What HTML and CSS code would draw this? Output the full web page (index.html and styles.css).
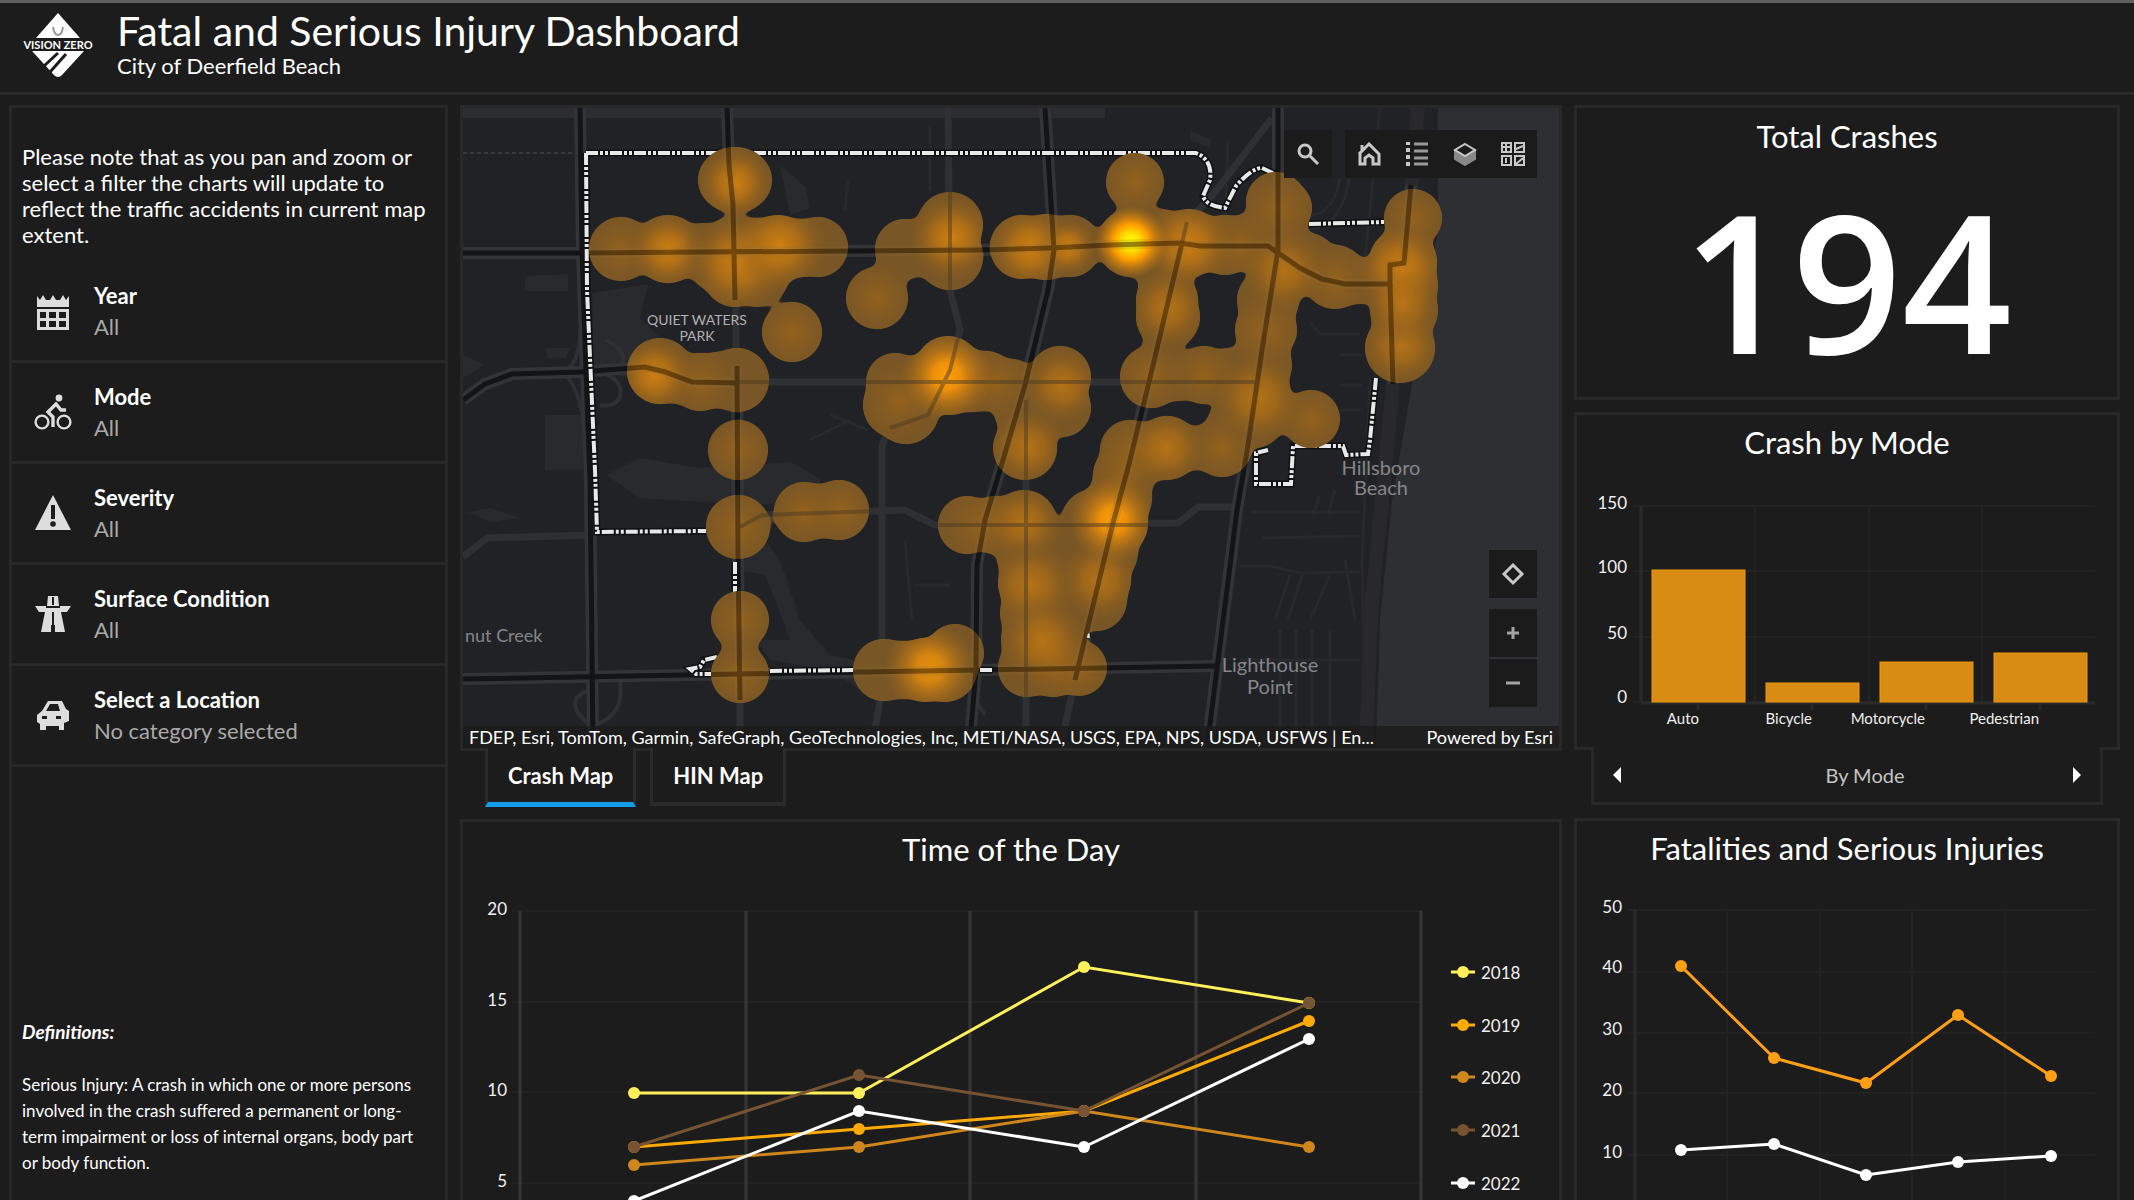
FILE: index.html
```html
<!DOCTYPE html>
<html lang="en">
<head>
<meta charset="utf-8">
<meta name="viewport" content="width=device-width, initial-scale=1">
<title>Fatal and Serious Injury Dashboard</title>
<link rel="stylesheet" href="styles.css">
</head>
<body>
<div class="app">
  <header class="topbar">
    <svg class="logo" viewBox="0 0 76 64" aria-hidden="true">
      <path d="M38 0 L60 25 H16 Z" fill="#fff"/>
      <path d="M33 14 C34 21 36 22 38 22 C40 22 42 21 43 14" fill="none" stroke="#999" stroke-width="2"/>
      <path d="M12 38 H64 L42 62 Q38 66 34 62 Z" fill="#fff"/>
      <path d="M38 40 L24 53 M46 41 L30 59" stroke="#1c1c1c" stroke-width="3"/>
      <text x="38" y="36" text-anchor="middle" class="logo-text">VISION ZERO</text>
    </svg>
    <div>
      <h1>Fatal and Serious Injury Dashboard</h1>
      <p class="subtitle">City of Deerfield Beach</p>
    </div>
  </header>

  <main class="grid">
    <aside class="panel sidebar">
      <p class="note">Please note that as you pan and zoom or select a filter the charts will update to reflect the traffic accidents in current map extent.</p>
      <button class="filter" type="button">
        <svg viewBox="0 0 38 38" aria-hidden="true"><path fill="#ddd" fill-rule="evenodd" d="M3 4 L6 8 L9 3 L12 8 H16 L19 3 L22 8 H26 L29 3 L32 8 L35 4 V15 H3 Z M3 17 H35 V38 H3 Z M6 20 V26 H12 V20 Z M15 20 V26 H22 V20 Z M25 20 V26 H32 V20 Z M6 29 V35 H12 V29 Z M15 29 V35 H22 V29 Z M25 29 V35 H32 V29 Z"/></svg>
        <span><b>Year</b><em>All</em></span>
      </button>
      <button class="filter" type="button">
        <svg viewBox="0 0 38 38" aria-hidden="true"><g fill="none" stroke="#ddd" stroke-width="2.4"><circle cx="8" cy="29" r="6.4"/><circle cx="30" cy="29" r="6.4"/><path stroke-width="3.4" d="M19 34 V24 L14 19 L22 11 L27 17 H32"/></g><circle cx="25" cy="5" r="3.4" fill="#ddd"/></svg>
        <span><b>Mode</b><em>All</em></span>
      </button>
      <button class="filter" type="button">
        <svg viewBox="0 0 38 38" aria-hidden="true"><path fill="#ddd" d="M19 1 L37 36 H1 Z"/><path d="M19 11 V25" stroke="#1c1c1c" stroke-width="4"/><circle cx="19" cy="30" r="2.8" fill="#1c1c1c"/></svg>
        <span><b>Severity</b><em>All</em></span>
      </button>
      <button class="filter" type="button">
        <svg viewBox="0 0 38 38" aria-hidden="true"><path fill="#ddd" d="M14 1 H24 L25 11 H37 L33 17 H27 L31 37 H21 V30 H17 V37 H7 L11 17 H5 L1 11 H13 Z"/><path d="M12 12 H26 M19 2 V10 M19 17 V30" stroke="#1c1c1c" stroke-width="2"/></svg>
        <span><b>Surface Condition</b><em>All</em></span>
      </button>
      <button class="filter" type="button">
        <svg viewBox="0 0 38 38" aria-hidden="true"><path fill="#ddd" fill-rule="evenodd" d="M14 5 H28 L32 13 L35 15 V25 L30 27 V34 H25 V30 H12 V34 H6 V28 L3 26 V19 L8 15 Z M16 8 L12 15 H26 L24 8 Z M8 20 V23 H13 V20 Z M22 20 V23 H27 V20 Z"/></svg>
        <span><b>Select a Location</b><em>No category selected</em></span>
      </button>
      <div class="definitions">
        <h2>Definitions:</h2>
        <p>Serious Injury: A crash in which one or more persons involved in the crash suffered a permanent or long-term impairment or loss of internal organs, body part or body function.</p>
      </div>
    </aside>

    <div class="column">
      <section>
        <div class="panel map">
          <svg class="map-canvas" viewBox="463 108 1096 640" preserveAspectRatio="xMidYMid slice" role="img" aria-label="Crash heat map">
            <defs>
              <filter id="merge" x="-5%" y="-5%" width="110%" height="110%" color-interpolation-filters="sRGB">
                <feGaussianBlur stdDeviation="4"/>
                <feComponentTransfer><feFuncA type="linear" slope="12" intercept="-5"/></feComponentTransfer>
              </filter>
              <mask id="blobs" maskUnits="userSpaceOnUse" x="463" y="108" width="1097" height="640">
                <g fill="#fff" filter="url(#merge)">
                <ellipse cx="735" cy="180" rx="37" ry="33"/>
                <circle cx="621" cy="249" r="32"/><circle cx="668" cy="249" r="34"/><circle cx="704" cy="252" r="29"/><circle cx="735" cy="250" r="34"/><circle cx="756" cy="250" r="32"/><circle cx="778" cy="249" r="34"/><circle cx="800" cy="248" r="29"/><circle cx="818" cy="247" r="30"/><circle cx="735" cy="275" r="32"/><circle cx="757" cy="275" r="32"/><circle cx="718" cy="262" r="30"/>
                <circle cx="792" cy="332" r="30"/>
                <circle cx="660" cy="371" r="33"/><circle cx="680" cy="378" r="26"/><circle cx="700" cy="382" r="29"/><circle cx="718" cy="380" r="28"/><circle cx="737" cy="380" r="32"/>
                <circle cx="738" cy="450" r="30"/>
                <circle cx="905" cy="249" r="30"/><circle cx="950" cy="225" r="33"/><circle cx="950" cy="257" r="33"/><circle cx="928" cy="247" r="30"/><circle cx="877" cy="298" r="31"/><circle cx="892" cy="272" r="17"/>
                <circle cx="895" cy="382" r="29"/><circle cx="948" cy="369" r="33"/><circle cx="950" cy="383" r="32"/><circle cx="920" cy="385" r="30"/><circle cx="906" cy="411" r="33"/><circle cx="896" cy="405" r="33"/><circle cx="986" cy="381" r="30"/><circle cx="972" cy="381" r="31"/>
                <circle cx="1022" cy="247" r="32"/><circle cx="1046" cy="247" r="33"/><circle cx="1070" cy="246" r="31"/>
                <circle cx="1135" cy="182" r="29"/><circle cx="1131" cy="243" r="34"/><rect x="1119" y="200" width="34" height="20"/><circle cx="1160" cy="240" r="31"/><circle cx="1189" cy="243" r="34"/><circle cx="1225" cy="245" r="30"/><circle cx="1250" cy="242" r="29"/>
                <circle cx="1165" cy="270" r="29"/><circle cx="1167" cy="300" r="31"/><circle cx="1168" cy="317" r="32"/><rect x="1144" y="335" width="36" height="24"/>
                <circle cx="1276" cy="202" r="30"/><circle cx="1284" cy="208" r="28"/><circle cx="1276" cy="230" r="31"/><circle cx="1278" cy="255" r="34"/><circle cx="1284" cy="272" r="31"/><circle cx="1308" cy="262" r="29"/><circle cx="1335" cy="277" r="32"/><circle cx="1360" cy="281" r="23"/>
                <circle cx="1413" cy="218" r="29"/><circle cx="1403" cy="262" r="34"/><circle cx="1404" cy="285" r="34"/><circle cx="1404" cy="310" r="34"/><circle cx="1400" cy="348" r="35"/>
                <circle cx="1268" cy="300" r="31"/><circle cx="1266" cy="330" r="31"/><circle cx="1261" cy="365" r="31"/><circle cx="1258" cy="395" r="33"/><circle cx="1254" cy="417" r="31"/><circle cx="1311" cy="419" r="29"/><rect x="1270" y="405" width="24" height="28"/>
                <circle cx="1151" cy="377" r="31"/><circle cx="1178" cy="376" r="25"/><circle cx="1204" cy="375" r="29"/><circle cx="1230" cy="375" r="27"/>
                <circle cx="1060" cy="377" r="31"/><circle cx="1062" cy="408" r="29"/><circle cx="1040" cy="410" r="28"/><circle cx="1025" cy="410" r="31"/><circle cx="1012" cy="385" r="26"/><circle cx="1025" cy="448" r="32"/>
                <circle cx="1130" cy="450" r="30"/><circle cx="1167" cy="448" r="32"/><circle cx="1148" cy="452" r="30"/><circle cx="1196" cy="448" r="22"/><circle cx="1222" cy="447" r="30"/><circle cx="1235" cy="425" r="28"/>
                <circle cx="1124" cy="475" r="31"/><circle cx="1120" cy="498" r="32"/><circle cx="1113" cy="523" r="35"/><circle cx="1094" cy="522" r="33"/>
                <circle cx="967" cy="525" r="29"/><circle cx="995" cy="525" r="29"/><circle cx="1024" cy="523" r="33"/><circle cx="1062" cy="550" r="25"/>
                <circle cx="1030" cy="557" r="33"/><circle cx="1031" cy="583" r="33"/><circle cx="1033" cy="613" r="33"/><circle cx="1034" cy="640" r="33"/><circle cx="1027" cy="668" r="29"/><circle cx="1053" cy="668" r="29"/><circle cx="1079" cy="668" r="28"/><circle cx="1062" cy="590" r="26"/><circle cx="1062" cy="625" r="26"/>
                <circle cx="1105" cy="552" r="33"/><circle cx="1099" cy="580" r="32"/><circle cx="1096" cy="600" r="31"/>
                <circle cx="738" cy="527" r="32"/><circle cx="804" cy="512" r="30"/><circle cx="822" cy="511" r="27"/><circle cx="839" cy="510" r="30"/>
                <circle cx="740" cy="620" r="29"/><circle cx="740" cy="674" r="29"/><rect x="723" y="638" width="34" height="20"/>
                <circle cx="884" cy="670" r="31"/><circle cx="903" cy="670" r="29"/><circle cx="925" cy="670" r="32"/><circle cx="945" cy="670" r="32"/><circle cx="955" cy="653" r="29"/>
                </g>
              </mask>
              <radialGradient id="warm"><stop offset="0" stop-color="#d28110" stop-opacity=".98"/><stop offset=".4" stop-color="#bb7413" stop-opacity=".8"/><stop offset="1" stop-color="#8a5d20" stop-opacity="0"/></radialGradient>
              <radialGradient id="mild"><stop offset="0" stop-color="#9c651a" stop-opacity=".8"/><stop offset="1" stop-color="#8a5d20" stop-opacity="0"/></radialGradient>
              <radialGradient id="hot"><stop offset="0" stop-color="#ffa00a"/><stop offset=".3" stop-color="#f39309" stop-opacity=".95"/><stop offset="1" stop-color="#b06f17" stop-opacity="0"/></radialGradient>
              <radialGradient id="peak"><stop offset="0" stop-color="#ffff00"/><stop offset=".22" stop-color="#ffe600"/><stop offset=".5" stop-color="#ff9d00"/><stop offset="1" stop-color="#c47a10" stop-opacity="0"/></radialGradient>
              <g id="highways" fill="none">
                <path d="M580 108 L582 250 L586 370 L590 480 L593 740"/>
                <path d="M727 108 L729 165 L733 205 L735 300 M737 366 L738 560 L740 700"/>
                <path d="M463 253 L580 253 L980 250 L1050 248 L1110 245 L1180 243 L1200 246 H1268 L1300 268 L1322 279 L1345 284 H1390 V265 L1404 263 L1411 185"/>
                <path d="M463 400 L485 384 L512 374 L580 372 L645 367 L665 372 L692 382 L738 383"/>
                <path d="M1045 108 L1054 250 L1048 290 L1025 385 L1003 460 L985 520 L977 565 L976 670 L970 740"/>
                <path d="M1278 108 V250 L1262 350 L1248 445 L1237 510 L1208 740"/>
                <path d="M1182 243 L1150 378 L1128 468 L1113 523 L1075 680"/>
                <path d="M463 679 L740 674 L980 670 L1215 666"/>
                <path d="M1390 284 L1393 384"/>
              </g>
              <path id="limits" fill="none" d="M586 153 H1196 Q1213 160 1210 180 L1203 196 Q1206 206 1225 208 L1236 186 Q1252 168 1262 168 L1275 174 M586 153 L587 290 L595 470 L597 532 L706 531 M735 562 V592 M1309 224 L1384 222 M1376 378 L1370 440 L1368 454 L1346 455 L1343 446 H1293 L1291 484 H1256 V453 L1268 450 M717 657 L704 660 L700 667 L690 669 L696 674 H712 M770 671 L853 670 M980 670 H993 M1087 629 L1088 638"/>
            </defs>
            <rect x="463" y="108" width="1097" height="640" fill="#212225"/>
            <path d="M1438 108 H1560 V748 H1376 L1380 620 L1392 500 L1412 384 L1438 230 Z" fill="#2e2f33"/>
            <path d="M463 108 H1105 V118 H463 Z" fill="#2c2d2f"/>
            <g fill="#292a2e">
              <path d="M592 293 L648 284 L640 318 L662 340 L640 380 L594 370 Z M526 276 L568 274 V291 H524 Z M545 415 H585 L583 470 H545 Z M606 475 L640 458 L700 468 L790 462 L820 478 V500 L760 505 L700 502 L640 498 Z M765 540 L780 560 L800 620 L830 655 L880 665 L860 690 L830 670 L770 660 L755 640 L790 640 L775 600 L765 575 L735 570 Z M463 355 L485 365 L463 378 Z M468 512 L490 508 L520 518 L490 522 Z M545 348 H570 L566 358 H548 Z"/>
              <path d="M780 165 L806 188 L810 208 L790 215 Z M1190 130 L1211 140 V148 L1190 140 Z"/>
            </g>
            <g fill="none" stroke="#28292c" stroke-width="3">
              <path d="M1310 230 Q1345 225 1350 170 M1312 215 Q1334 212 1340 178 M1310 322 L1320 334 H1360 M1340 355 H1362 M1340 385 H1362 M1340 410 H1362 M1225 225 L1228 140 M1250 512 H1360 M1262 538 L1360 536 M1240 566 H1270 L1300 573 L1360 572 M1290 575 L1275 620 M1302 575 L1288 620 M1330 575 L1310 620 M1345 560 L1355 620 M1280 630 V725 M1296 630 V725 M1312 630 V725 M1330 630 V725 M1240 660 H1360 M1320 495 L1313 515 M1335 490 L1328 515 M830 415 L868 430 M810 440 L850 420 M905 540 L912 620 M915 585 H950 M848 180 L845 210 M930 125 V190 M1380 108 L1365 260 M1370 380 L1362 560 L1366 725"/>
            </g>
            <g fill="none" stroke="#2f3033" stroke-width="7">
              <path d="M948 108 L950 290 L960 330 L950 370 L928 415 L890 428 L882 445 V690 L873 740"/>
              <path d="M738 382 H1255 M463 557 L487 538 L590 535 M740 527 L762 515 L905 510 L935 525 L1178 523 L1198 507 H1232"/>
              <path d="M1026 400 V740 M1187 222 L1212 196 L1272 118 M736 300 V366 M1075 680 L1062 740 M740 700 V740"/>
              <path d="M1418 108 L1411 190 M1393 384 L1382 500 L1372 600 L1366 740" stroke-width="14" stroke="#29292c"/>
              <path d="M605 340 C630 350 630 370 600 372 C630 380 625 410 600 405 M580 330 Q580 368 560 372 Q580 380 586 440 M590 690 Q560 700 590 725 M595 725 Q625 715 620 682 M970 660 Q955 670 985 715" stroke-width="4"/>
              <path d="M463 153 H580" stroke-width="2" stroke-dasharray="4 3" stroke="#38393b"/>
              <circle cx="1054" cy="250" r="16" stroke-width="3"/>
            </g>
            <use href="#highways" stroke="#333437" stroke-width="12"/>
            <use href="#highways" stroke="#131416" stroke-width="5"/>
            <use href="#limits" stroke="#101113" stroke-width="7"/>
            <use href="#limits" stroke="#e8e8e8" stroke-width="4" stroke-dasharray="12 2 3 2 3 2"/>
            <g mask="url(#blobs)">
              <rect x="463" y="108" width="1097" height="640" fill="#795625"/>
              <g fill="url(#mild)">
                <circle cx="621" cy="250" r="34"/><circle cx="792" cy="332" r="36"/><circle cx="700" cy="382" r="36"/><circle cx="738" cy="450" r="34"/><circle cx="877" cy="298" r="34"/><circle cx="900" cy="400" r="40"/><circle cx="1135" cy="182" r="34"/><circle cx="1278" cy="210" r="40"/><circle cx="1240" cy="246" r="40"/><circle cx="1335" cy="280" r="40"/><circle cx="1266" cy="330" r="44"/><circle cx="1311" cy="419" r="36"/><circle cx="1151" cy="377" r="40"/><circle cx="1204" cy="375" r="36"/><circle cx="1222" cy="447" r="36"/><circle cx="1124" cy="475" r="40"/><circle cx="985" cy="525" r="44"/><circle cx="738" cy="527" r="40"/><circle cx="804" cy="512" r="34"/><circle cx="841" cy="510" r="36"/><circle cx="740" cy="620" r="34"/><circle cx="740" cy="674" r="34"/><circle cx="1080" cy="668" r="34"/><circle cx="1055" cy="665" r="40"/><circle cx="1413" cy="218" r="32"/><circle cx="995" cy="382" r="40"/><circle cx="1135" cy="450" r="36"/>
              </g>
              <g fill="url(#warm)">
                <circle cx="735" cy="183" r="38"/><circle cx="668" cy="250" r="40"/><circle cx="738" cy="262" r="52"/><circle cx="780" cy="246" r="48"/><circle cx="655" cy="375" r="40"/><circle cx="952" cy="238" r="44"/><circle cx="1030" cy="248" r="44"/><circle cx="1068" cy="247" r="30"/><circle cx="1188" cy="244" r="48"/><circle cx="1401" cy="268" r="48"/>
              </g>
              <g fill="url(#warm)" opacity=".7">
                <circle cx="1168" cy="308" r="42"/><circle cx="1284" cy="270" r="44"/><circle cx="1401" cy="345" r="42"/><circle cx="1402" cy="305" r="40"/><circle cx="1258" cy="398" r="48"/><circle cx="1062" cy="385" r="40"/><circle cx="1028" cy="447" r="40"/><circle cx="1167" cy="448" r="40"/><circle cx="1025" cy="523" r="40"/><circle cx="1031" cy="585" r="46"/><circle cx="1042" cy="640" r="46"/><circle cx="1100" cy="580" r="42"/>
              </g>
              <circle cx="947" cy="376" r="46" fill="url(#hot)"/><circle cx="1113" cy="520" r="44" fill="url(#hot)"/><circle cx="930" cy="668" r="46" fill="url(#hot)" opacity=".8"/>
              <circle cx="1131" cy="242" r="36" fill="url(#peak)"/>
              <g opacity=".5"><use href="#highways" stroke="#8a7040" stroke-width="10" opacity=".4"/><use href="#highways" stroke="#2b1800" stroke-width="5"/></g>
              <path d="M950 192 L950 290 L960 330 L950 370 L928 415 L890 428 M738 382 H1255 M740 527 L762 515 L905 510 L935 525 H1178 M1026 400 V740 M1187 222 L1182 243" fill="none" stroke="#4b3b22" stroke-width="4" opacity=".5"/>
            </g>
            <g class="place">
              <text x="1381" y="475">Hillsboro</text><text x="1381" y="495">Beach</text>
              <text x="1270" y="672">Lighthouse</text><text x="1270" y="694">Point</text>
              <text x="465" y="642" class="edge">nut Creek</text>
              <text x="697" y="325" class="park">QUIET WATERS</text><text x="697" y="341" class="park">PARK</text>
            </g>
          </svg>
          <div class="map-tools">
            <button type="button" aria-label="Search"><svg viewBox="0 0 24 24"><circle cx="9" cy="9" r="6"/><path d="M14 14 L22 22"/></svg></button>
            <div class="tool-group">
              <button type="button" aria-label="Home"><svg viewBox="0 0 24 24"><path d="M2 12 L12 2 L22 12 V22 H16 V16 L12 13 L8 16 V22 H3 V11 M5 8 V3"/></svg></button>
              <button type="button" aria-label="Legend"><svg viewBox="0 0 24 24"><path d="M1 1 H5 M1 8 H5 M1 15 H5 M1 22 H5" stroke-width="4"/><path d="M9 2 H23 M9 9 H23 M9 16 H23 M9 22 H23" stroke="#999"/></svg></button>
              <button type="button" aria-label="Layers"><svg viewBox="0 0 24 24"><path d="M2 9 L12 15 L22 9 V17 L12 23 L2 17 Z" fill="#888" stroke="#888" stroke-width="2"/><path d="M12 2 L22 8 L12 14 L2 8 Z" fill="#1b1b1c" stroke-width="2"/></svg></button>
              <button type="button" aria-label="Basemaps"><svg viewBox="0 0 24 24" class="fine"><path d="M1 1 H10 V10 H1 Z M14 1 H23 V10 H14 Z M1 14 H10 V23 H1 Z M14 14 H23 V23 H14 Z M5 1 V10 M1 5 H10 M15 7 L22 4 M5 16 V21 M15 22 L22 16"/></svg></button>
            </div>
          </div>
          <div class="map-nav">
            <button type="button" aria-label="Reset orientation"><svg viewBox="0 0 24 24"><path d="M12 3 L21 12 L12 21 L3 12 Z"/></svg></button>
            <div>
              <button type="button" aria-label="Zoom in"><svg viewBox="0 0 24 24"><path d="M12 6 V18 M6 12 H18"/></svg></button>
              <button type="button" aria-label="Zoom out"><svg viewBox="0 0 24 24"><path d="M5 12 H19"/></svg></button>
            </div>
          </div>
          <div class="attribution">
            <span>FDEP, Esri, TomTom, Garmin, SafeGraph, GeoTechnologies, Inc, METI/NASA, USGS, EPA, NPS, USDA, USFWS | En...</span>
            <span>Powered by <a href="#esri">Esri</a></span>
          </div>
        </div>
        <div class="tabs" role="tablist">
          <button class="tab active" role="tab" aria-selected="true" type="button">Crash Map</button>
          <button class="tab" role="tab" aria-selected="false" type="button">HIN Map</button>
        </div>
      </section>

      <section class="panel chart-panel last">
        <h2>Time of the Day</h2>
        <svg class="chart" viewBox="463 880 1096 325" role="img" aria-label="Crashes by time of the day">
          <path class="gridline" d="M512 912 H1421 M512 1003 H1421 M512 1093 H1421 M512 1184 H1421"/>
          <path class="divider" d="M520 912 V1205 M746 912 V1205 M970 912 V1205 M1196 912 V1205 M1421 912 V1205"/>
          <g class="axis"><text x="507" y="916">20</text><text x="507" y="1007">15</text><text x="507" y="1097">10</text><text x="507" y="1188">5</text></g>
          <g class="series yellow"><polyline points="634,1094 859,1094 1084,968 1309,1004"/><circle cx="634" cy="1094" r="6"/><circle cx="859" cy="1094" r="6"/><circle cx="1084" cy="968" r="6"/><circle cx="1309" cy="1004" r="6"/></g>
          <g class="series orange"><polyline points="634,1148 859,1130 1084,1112 1309,1022"/><circle cx="634" cy="1148" r="6"/><circle cx="859" cy="1130" r="6"/><circle cx="1084" cy="1112" r="6"/><circle cx="1309" cy="1022" r="6"/></g>
          <g class="series amber"><polyline points="634,1166 859,1148 1084,1112 1309,1148"/><circle cx="634" cy="1166" r="6"/><circle cx="859" cy="1148" r="6"/><circle cx="1084" cy="1112" r="6"/><circle cx="1309" cy="1148" r="6"/></g>
          <g class="series brown"><polyline points="634,1148 859,1076 1084,1112 1309,1004"/><circle cx="634" cy="1148" r="6"/><circle cx="859" cy="1076" r="6"/><circle cx="1084" cy="1112" r="6"/><circle cx="1309" cy="1004" r="6"/></g>
          <g class="series white"><polyline points="634,1202 859,1112 1084,1148 1309,1040"/><circle cx="634" cy="1202" r="6"/><circle cx="859" cy="1112" r="6"/><circle cx="1084" cy="1148" r="6"/><circle cx="1309" cy="1040" r="6"/></g>
          <g class="series yellow"><path d="M1451 973 H1475"/><circle cx="1463" cy="973" r="6"/></g>
          <g class="series orange"><path d="M1451 1026 H1475"/><circle cx="1463" cy="1026" r="6"/></g>
          <g class="series amber"><path d="M1451 1078 H1475"/><circle cx="1463" cy="1078" r="6"/></g>
          <g class="series brown"><path d="M1451 1131 H1475"/><circle cx="1463" cy="1131" r="6"/></g>
          <g class="series white"><path d="M1451 1184 H1475"/><circle cx="1463" cy="1184" r="6"/></g>
          <g class="legend"><text x="1481" y="980">2018</text><text x="1481" y="1033">2019</text><text x="1481" y="1085">2020</text><text x="1481" y="1138">2021</text><text x="1481" y="1191">2022</text></g>
        </svg>
      </section>
    </div>

    <div class="column">
      <section class="panel total">
        <h2>Total Crashes</h2>
        <p class="total-value">194</p>
      </section>
      <section>
        <div class="panel chart-panel">
          <h2>Crash by Mode</h2>
          <svg class="chart" viewBox="1577 472 540 275" role="img" aria-label="Crashes by mode">
            <path class="gridline" d="M1634 506 H2095 M1634 571 H2095 M1634 637 H2095 M1634 702 H2095 M1755 506 V702 M1869 506 V702 M1982 506 V702"/>
            <path class="baseline" d="M1641 506 V702 M1641 703 H2095 M1698 703 V710 M1812 703 V710 M1926 703 V710 M2040 703 V710"/>
            <g class="axis"><text x="1627" y="509">150</text><text x="1627" y="573">100</text><text x="1627" y="639">50</text><text x="1627" y="703">0</text></g>
            <g class="bar"><rect x="1652" y="570" width="93" height="132"/><rect x="1766" y="683" width="93" height="19"/><rect x="1880" y="662" width="93" height="40"/><rect x="1994" y="653" width="93" height="49"/></g>
            <g class="axis small"><text x="1699" y="724">Auto</text><text x="1812" y="724">Bicycle</text><text x="1925" y="724">Motorcycle</text><text x="2039" y="724">Pedestrian</text></g>
          </svg>
        </div>
        <div class="pager">
          <button type="button" aria-label="Previous chart"><svg viewBox="0 0 10 16"><path d="M9 0 V16 L1 8 Z"/></svg></button>
          <span>By Mode</span>
          <button type="button" aria-label="Next chart"><svg viewBox="0 0 10 16"><path d="M1 0 V16 L9 8 Z"/></svg></button>
        </div>
      </section>
      <section class="panel chart-panel last">
        <h2>Fatalities and Serious Injuries</h2>
        <svg class="chart" viewBox="1577 879 540 325" role="img" aria-label="Fatalities and serious injuries by year">
          <path class="gridline" d="M1628 911 H2095 M1628 973 H2095 M1628 1034 H2095 M1628 1094 H2095 M1628 1156 H2095 M1727 911 V1205 M1820 911 V1205 M1912 911 V1205 M2005 911 V1205"/>
          <path class="baseline" d="M1635 911 V1205"/>
          <g class="axis"><text x="1622" y="914">50</text><text x="1622" y="974">40</text><text x="1622" y="1036">30</text><text x="1622" y="1097">20</text><text x="1622" y="1159">10</text></g>
          <g class="series gold"><polyline points="1681,967 1774,1059 1866,1084 1958,1016 2051,1077"/><circle cx="1681" cy="967" r="6"/><circle cx="1774" cy="1059" r="6"/><circle cx="1866" cy="1084" r="6"/><circle cx="1958" cy="1016" r="6"/><circle cx="2051" cy="1077" r="6"/></g>
          <g class="series white"><polyline points="1681,1151 1774,1145 1866,1176 1958,1163 2051,1157"/><circle cx="1681" cy="1151" r="6"/><circle cx="1774" cy="1145" r="6"/><circle cx="1866" cy="1176" r="6"/><circle cx="1958" cy="1163" r="6"/><circle cx="2051" cy="1157" r="6"/></g>
        </svg>
      </section>
    </div>
  </main>
</div>
</body>
</html>
```
FILE: styles.css
```css
* { box-sizing: border-box; }

body {
  margin: 0;
  background: #1c1c1c;
  color: #fff;
  font-family: Lato, "Open Sans", sans-serif;
}

h1, h2, p { margin: 0; font-weight: 400; }

button {
  margin: 0;
  padding: 0;
  border: 0;
  background: none;
  color: inherit;
  font: inherit;
  cursor: pointer;
}

.app {
  display: flex;
  flex-direction: column;
  height: 100vh;
  overflow: hidden;
  border-top: 3px solid #606060;
}

.topbar {
  display: flex;
  flex: none;
  gap: 21px;
  padding: 6px 20px 13px;
  border-bottom: 3px solid #2a2a2a;
}

.logo { width: 76px; height: 64px; margin-top: 4px; }
.logo-text { fill: #fff; font-size: 11px; font-weight: 700; }

h1 { font-size: 41px; line-height: 44px; }
.subtitle { font-size: 22px; line-height: 26px; }

.grid {
  display: grid;
  flex: 1;
  grid-template-columns: 439fr 1102fr 546fr;
  gap: 12px;
  min-height: 0;
  padding: 10px 14px 0 9px;
}

.column {
  display: flex;
  flex-direction: column;
  gap: 12px;
  min-width: 0;
}

.panel { border: 3px solid #282828; }
.last { flex: 1; border-bottom: 0; }

.sidebar {
  display: flex;
  flex-direction: column;
  border-bottom: 0;
}

.note { padding: 36px 8px 14px 10px; font-size: 22px; line-height: 26px; }

.filter {
  display: flex;
  flex: none;
  align-items: center;
  gap: 22px;
  height: 101px;
  padding-left: 22px;
  border-bottom: 3px solid #282828;
  text-align: left;
}

.filter svg { width: 38px; height: 38px; }
.filter b, .filter em { display: block; font-size: 22px; line-height: 31px; }
.filter b { font-weight: 700; }
.filter em { color: #a9a9a9; font-style: normal; }

.definitions { margin-top: auto; padding: 0 20px 28px 10px; font-size: 17px; line-height: 26px; }
.definitions h2 { margin-bottom: 27px; font-size: 19px; font-style: italic; font-weight: 700; line-height: 26px; }

.map { position: relative; aspect-ratio: 1102 / 646; overflow: hidden; }
.map-canvas { display: block; width: 100%; height: 100%; }

.place text { fill: #85868a; font-size: 20px; text-anchor: middle; }
.place .edge { font-size: 18px; text-anchor: start; }
.place .park { fill: #b0b0b2; font-size: 14px; }

.map-tools, .map-nav, .attribution { position: absolute; }
.map-tools { top: 22px; right: 22px; display: flex; gap: 13px; }
.tool-group { display: flex; }

.map-tools button, .map-nav button {
  display: grid;
  place-items: center;
  width: 48px;
  height: 48px;
  background: #1b1b1c;
}

.map-tools svg, .map-nav svg {
  display: block;
  width: 24px;
  height: 24px;
  fill: none;
  stroke: #c8c8c8;
  stroke-width: 3;
}

.map-tools .fine { stroke-width: 2; }
.map-nav { right: 22px; bottom: 41px; display: grid; gap: 11px; }
.map-nav div { display: grid; gap: 2px; }
.map-nav div svg { stroke: #a4a4a4; }

.attribution {
  right: 0;
  bottom: 0;
  left: 0;
  display: flex;
  justify-content: space-between;
  padding: 0 6px;
  background: rgba(28, 28, 28, 0.8);
  font-size: 18px;
  line-height: 22px;
  white-space: nowrap;
}

.attribution a { color: inherit; text-decoration: none; }

/* The tabs and the pager hang from the panel above and open into it. */
.tabs {
  position: relative;
  display: flex;
  gap: 14px;
  align-items: flex-start;
  margin-top: -3px;
  padding-left: 25px;
}

.tab {
  height: 58px;
  padding: 0 20px;
  border: solid #2b2b2b;
  border-width: 0 3px 4px;
  background: #1c1c1c;
  font-size: 22px;
  font-weight: 700;
}

.tab.active { height: 59px; border-bottom: 5px solid #149bea; }

.chart-panel h2, .total h2 { font-size: 31px; line-height: 36px; text-align: center; }
.chart-panel h2 { padding: 9px 0 12px; }
.total h2 { padding-top: 10px; }

.total { height: 295px; }

.total-value {
  padding-top: 12px;
  font-family: "Open Sans", Lato, sans-serif;
  font-size: 192px;
  font-weight: 600;
  line-height: 228px;
  text-align: center;
}

.chart { display: block; width: 100%; height: auto; }
.gridline { fill: none; stroke: #222; stroke-width: 2; }
.baseline { fill: none; stroke: #2a2a2a; stroke-width: 3; }
.divider { fill: none; stroke: #363636; stroke-width: 3; }
.axis text { fill: #f0f0f0; font-size: 17px; text-anchor: end; }
.axis.small text { font-size: 15px; }
.legend text { fill: #f0f0f0; font-size: 17px; }
.bar rect { fill: #d98c13; stroke: #ec980f; stroke-width: 1; }

.series { fill: currentColor; stroke: currentColor; stroke-width: 3; }
.series polyline { fill: none; }
.series circle { stroke: none; }
.yellow { color: #fff05a; }
.orange { color: #ffaa00; }
.amber { color: #cf861c; }
.brown { color: #765433; }
.gold { color: #ff9f14; }
.white { color: #fff; }

.pager {
  position: relative;
  display: flex;
  align-items: center;
  justify-content: space-between;
  height: 58px;
  margin: -3px 17px 1px;
  padding: 0 18px;
  border: solid #282828;
  border-width: 0 3px 3px;
  background: #1c1c1c;
  font-size: 20px;
}

.pager span { padding-left: 36px; color: #c4c4c4; }
.pager svg { display: block; width: 10px; height: 16px; fill: #fff; }
```
